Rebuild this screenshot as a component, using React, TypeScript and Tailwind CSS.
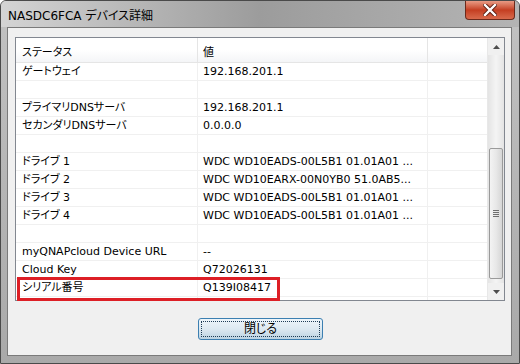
const rows: [string, string][] = [
  ["ゲートウェイ", "192.168.201.1"],
  ["", ""],
  ["プライマリDNSサーバ", "192.168.201.1"],
  ["セカンダリDNSサーバ", "0.0.0.0"],
  ["", ""],
  ["ドライブ 1", "WDC WD10EADS-00L5B1 01.01A01 ..."],
  ["ドライブ 2", "WDC WD10EARX-00N0YB0 51.0AB5..."],
  ["ドライブ 3", "WDC WD10EADS-00L5B1 01.01A01 ..."],
  ["ドライブ 4", "WDC WD10EADS-00L5B1 01.01A01 ..."],
  ["", ""],
  ["myQNAPcloud Device URL", "--"],
  ["Cloud Key", "Q72026131"],
  ["シリアル番号", "Q139I08417"],
];

function CloseIcon() {
  return (
    <svg width="14" height="12" viewBox="0 0 14 12">
      <path d="M2 1 L12 11 M12 1 L2 11" stroke="#5a1d12" strokeWidth="4.2" strokeLinecap="square" />
      <path d="M2 1 L12 11 M12 1 L2 11" stroke="#ffffff" strokeWidth="2.4" strokeLinecap="square" />
    </svg>
  );
}

function Scrollbar() {
  return (
    <div className="w-[17px] flex flex-col bg-[#f0f0f0] border-l border-[#e8e8e8]">
      {/* up arrow */}
      <div className="h-[17px] flex items-center justify-center">
        <svg width="7" height="4" viewBox="0 0 7 4">
          <path d="M0 4 L3.5 0 L7 4 Z" fill="#4d4d4d" />
        </svg>
      </div>
      <div className="flex-1 flex flex-col bg-gradient-to-r from-[#e4e4e4] via-[#f4f4f4] to-[#e4e4e4]">
        <div className="h-[93px]" />
        {/* thumb */}
        <div className="h-[131px] mx-[1px] rounded-[2px] border border-[#9a9a9a] bg-gradient-to-r from-[#f3f3f3] via-[#e8e8e8] to-[#d6d6d6] flex items-center justify-center">
          <div className="flex flex-col gap-[1px]">
            <div className="w-[6px] h-[1px] bg-[#6e6e6e]" />
            <div className="w-[6px] h-[1px] bg-[#6e6e6e]" />
            <div className="w-[6px] h-[1px] bg-[#6e6e6e]" />
            <div className="w-[6px] h-[1px] bg-[#6e6e6e]" />
          </div>
        </div>
        <div className="flex-1" />
      </div>
      {/* down arrow */}
      <div className="h-[17px] flex items-center justify-center">
        <svg width="7" height="4" viewBox="0 0 7 4">
          <path d="M0 0 L3.5 4 L7 0 Z" fill="#4d4d4d" />
        </svg>
      </div>
    </div>
  );
}

export default function App() {
  return (
    <div className="w-[520px] h-[364px] relative flex flex-col bg-gradient-to-b from-[#c2c2c2] to-[#a9a9a9] border border-[#4a4a4a] rounded-t-[6px] overflow-hidden font-['DejaVu_Sans','Noto_Sans_CJK_JP',sans-serif] text-black [font-feature-settings:'palt']">
      {/* title bar */}
      <div className="h-[26px] flex items-start justify-between bg-gradient-to-r from-[#d4d4d4] via-[#9c9c9c] to-[#b4b4b4]">
        <div className="pl-[7px] pt-[8px] text-[12px] leading-[14px]">NASDC6FCA デバイス詳細</div>
        <div className="mr-[4px] w-[50px] h-[19px] rounded-b-[4px] border border-t-0 border-[#6b2a1c] bg-gradient-to-b from-[#e89a84] via-[#c43e21] to-[#d86a4c] flex items-center justify-center">
          <CloseIcon />
        </div>
      </div>

      {/* frame + client */}
      <div className="flex-1 flex pl-[6px] pr-[7px] pb-[7px]">
        <div className="flex-1 flex flex-col border border-[#7a7a7a] bg-[#f0f0f0] pt-[9px] pl-[7px] pr-[6px]">
          {/* list view */}
          <div className="relative h-[264px] flex border border-[#828790] bg-white text-[11px]">
            <div className="flex-1 flex flex-col">
              {/* header */}
              <div className="h-[25px] flex border-b border-[#e5e5e5] bg-gradient-to-b from-white via-white to-[#f4f5f7]">
                <div className="w-[182px] border-r border-[#e5e5e5] pl-[6px] pt-[6px] flex items-center">ステータス</div>
                <div className="w-[230px] border-r border-[#e5e5e5] pl-[5px] pt-[6px] flex items-center">値</div>
                <div className="flex-1" />
              </div>
              {rows.map(([k, v], i) => (
                <div key={i} className="h-[18px] flex border-b border-[#f0f0f0]">
                  <div className="w-[182px] border-r border-[#f0f0f0] pl-[6px] pt-[2px] flex items-center whitespace-nowrap">{k}</div>
                  <div className="w-[230px] border-r border-[#f0f0f0] pl-[5px] pt-[2px] flex items-center whitespace-nowrap overflow-hidden">{v}</div>
                  <div className="flex-1" />
                </div>
              ))}
              <div className="flex-1 flex">
                <div className="w-[182px] border-r border-[#f0f0f0]" />
                <div className="w-[230px] border-r border-[#f0f0f0]" />
              </div>
            </div>
            <Scrollbar />
            {/* red highlight */}
            <div className="absolute left-[1px] top-[239px] w-[263px] h-[24px] border-[3px] border-[#dd1f26]" />
          </div>

          {/* close button */}
          <div className="flex justify-center pt-[17px] pl-[1px]">
            <div className="w-[125px] h-[22px] rounded-[3px] border border-[#3c7fb1] bg-gradient-to-b from-[#eef5fa] via-[#dde9f1] to-[#bcd3e2] p-[2px]">
              <div className="h-full border border-dotted border-[#1e3c55] flex items-center justify-center text-[12px]">閉じる</div>
            </div>
          </div>
        </div>
      </div>
    </div>
  );
}
